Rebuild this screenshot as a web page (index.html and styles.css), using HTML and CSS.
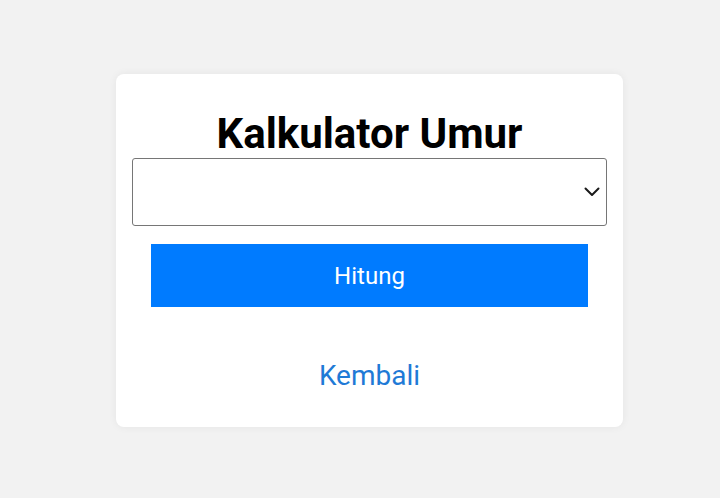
FILE: index.html
```html
<!DOCTYPE html>
<html lang="id">
<head>
<meta charset="utf-8">
<title>Kalkulator Umur</title>
<link rel="stylesheet" href="styles.css">
</head>
<body>
<main class="card">
  <h1 class="title">Kalkulator Umur</h1>
  <div class="select-wrap">
    <select class="select" aria-label="Pilih"></select>
    <svg class="chevron" width="16" height="10" viewBox="0 0 16 10" aria-hidden="true">
      <path d="M1.5 1.5 L8 8 L14.5 1.5" fill="none" stroke="#1a1a1a" stroke-width="2" stroke-linecap="round" stroke-linejoin="round"/>
    </svg>
  </div>
  <button class="btn" type="button">Hitung</button>
  <a class="back" href="#">Kembali</a>
</main>
</body>
</html>
```
FILE: styles.css
```css
html, body {
  margin: 0;
  padding: 0;
}
body {
  background: #f2f2f2;
  font-family: Roboto, "Noto Sans", Arial, sans-serif;
  min-height: 498px;
  padding-top: 74px;
  box-sizing: border-box;
}
.card {
  width: 507px;
  margin-left: 116px;
  box-sizing: border-box;
  background: #ffffff;
  border-radius: 8px;
  box-shadow: 0 0 8px rgba(0, 0, 0, 0.06);
  padding: 38px 16px 34px;
  display: flex;
  flex-direction: column;
  align-items: stretch;
}
.title {
  margin: 0 0 2px;
  font-size: 42px;
  line-height: 44px;
  font-weight: 700;
  color: #000;
  text-align: center;
}
.select-wrap {
  position: relative;
  height: 68px;
}
.select {
  appearance: none;
  -webkit-appearance: none;
  width: 100%;
  height: 68px;
  box-sizing: border-box;
  border: 1px solid #767676;
  border-radius: 3px;
  background: #fff;
  margin: 0;
  font-family: inherit;
  font-size: 20px;
}
.chevron {
  position: absolute;
  right: 7px;
  top: 29px;
}
.btn {
  margin: 18px 19px 0;
  height: 63px;
  border: none;
  border-radius: 0;
  background: #007bff;
  color: #fff;
  font-family: inherit;
  font-size: 24px;
  font-weight: 400;
  padding: 0;
}
.back {
  margin-top: 52px;
  align-self: center;
  font-size: 28px;
  line-height: 34px;
  color: #1f7ad6;
  text-decoration: none;
}
```
